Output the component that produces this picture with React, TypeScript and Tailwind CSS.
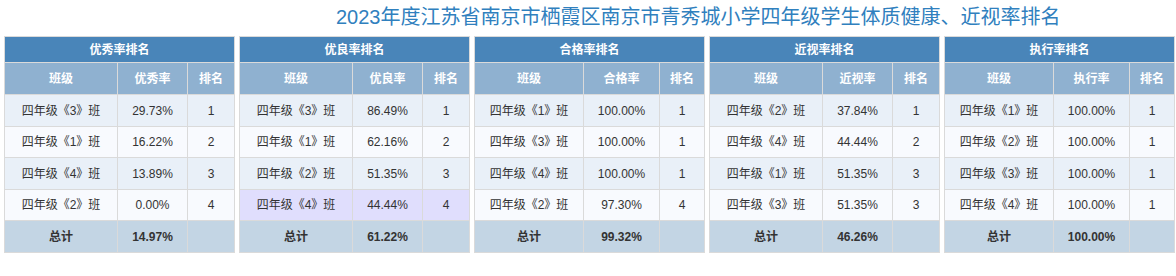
import React from "react";

interface Row {
  name: string;
  rate: string;
  rank: string;
  highlight?: boolean;
}

interface RankTable {
  title: string;
  rateLabel: string;
  rows: Row[];
  total: string;
  wide?: boolean;
}

const TABLES: RankTable[] = [
  {
    title: "优秀率排名",
    rateLabel: "优秀率",
    rows: [
      { name: "四年级《3》班", rate: "29.73%", rank: "1" },
      { name: "四年级《1》班", rate: "16.22%", rank: "2" },
      { name: "四年级《4》班", rate: "13.89%", rank: "3" },
      { name: "四年级《2》班", rate: "0.00%", rank: "4" },
    ],
    total: "14.97%",
  },
  {
    title: "优良率排名",
    rateLabel: "优良率",
    rows: [
      { name: "四年级《3》班", rate: "86.49%", rank: "1" },
      { name: "四年级《1》班", rate: "62.16%", rank: "2" },
      { name: "四年级《2》班", rate: "51.35%", rank: "3" },
      { name: "四年级《4》班", rate: "44.44%", rank: "4", highlight: true },
    ],
    total: "61.22%",
  },
  {
    title: "合格率排名",
    rateLabel: "合格率",
    rows: [
      { name: "四年级《1》班", rate: "100.00%", rank: "1" },
      { name: "四年级《3》班", rate: "100.00%", rank: "1" },
      { name: "四年级《4》班", rate: "100.00%", rank: "1" },
      { name: "四年级《2》班", rate: "97.30%", rank: "4" },
    ],
    total: "99.32%",
    wide: true,
  },
  {
    title: "近视率排名",
    rateLabel: "近视率",
    rows: [
      { name: "四年级《2》班", rate: "37.84%", rank: "1" },
      { name: "四年级《4》班", rate: "44.44%", rank: "2" },
      { name: "四年级《1》班", rate: "51.35%", rank: "3" },
      { name: "四年级《3》班", rate: "51.35%", rank: "3" },
    ],
    total: "46.26%",
  },
  {
    title: "执行率排名",
    rateLabel: "执行率",
    rows: [
      { name: "四年级《1》班", rate: "100.00%", rank: "1" },
      { name: "四年级《2》班", rate: "100.00%", rank: "1" },
      { name: "四年级《3》班", rate: "100.00%", rank: "1" },
      { name: "四年级《4》班", rate: "100.00%", rank: "1" },
    ],
    total: "100.00%",
    wide: true,
  },
];

const cell = "border border-[#dadada] text-center align-middle p-0";

function RankingTable({ table }: { table: RankTable }) {
  return (
    <table className="w-[231px] table-fixed border-collapse border border-[#cccccc] text-[12px]">
      <colgroup>
        <col className={table.wide ? "w-[109px]" : "w-[113px]"} />
        <col className={table.wide ? "w-[76px]" : "w-[70px]"} />
        <col />
      </colgroup>
      <thead>
        <tr className="h-[26px] bg-[#4985b9]">
          <th colSpan={3} className={`${cell} font-bold text-white`}>
            {table.title}
          </th>
        </tr>
        <tr className="h-[32px] bg-[#8fb1d0] font-bold text-white">
          <th className={cell}>班级</th>
          <th className={cell}>{table.rateLabel}</th>
          <th className={cell}>排名</th>
        </tr>
      </thead>
      <tbody className="text-[#333333]">
        {table.rows.map((row, i) => (
          <tr
            key={row.name}
            className={
              row.highlight
                ? "h-[31px] bg-[#e0defd]"
                : i % 2 === 0
                ? "h-[32px] bg-[#e9f0f8]"
                : "h-[31px] bg-[#f8fafe]"
            }
          >
            <td className={cell}>{row.name}</td>
            <td className={cell}>{row.rate}</td>
            <td className={cell}>{row.rank}</td>
          </tr>
        ))}
        <tr className="h-[32px] bg-[#c3d5e4] font-bold">
          <td className={cell}>总计</td>
          <td className={cell}>{table.total}</td>
          <td className={cell}></td>
        </tr>
      </tbody>
    </table>
  );
}

export default function App() {
  return (
    <div
      className="h-[276px] w-[1176px] bg-white"
      style={{ fontFamily: '"Liberation Sans", "Noto Sans CJK SC", sans-serif' }}
    >
      <div className="flex h-[36px] items-center pl-[336px] pb-[3px] text-[20px] leading-none text-[#3080be]">
        2023年度江苏省南京市栖霞区南京市青秀城小学四年级学生体质健康、近视率排名
      </div>
      <div className="flex gap-[4px] pl-[4px]">
        {TABLES.map((t) => (
          <RankingTable key={t.title} table={t} />
        ))}
      </div>
    </div>
  );
}
